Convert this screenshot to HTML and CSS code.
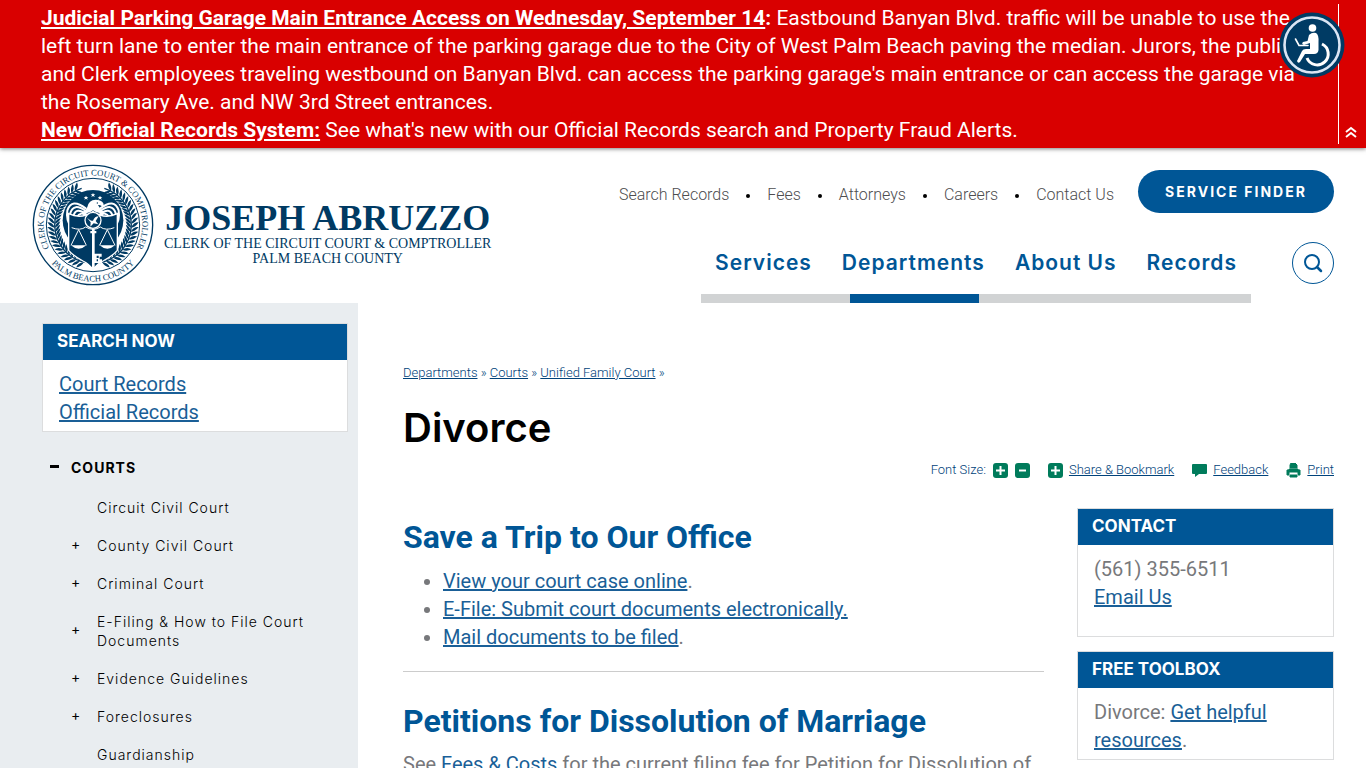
FILE: index.html
```
<!DOCTYPE html>
<html lang="en">
<head>
    <meta charset="UTF-8">
    <meta name="viewport" content="width=device-width, initial-scale=1.0">
    <title>Divorce | Clerk of the Circuit Court &amp; Comptroller, Palm Beach County</title>
    <link rel="stylesheet" href="styles.css">
</head>
<body>
    <div class="alert">
        <div class="alert-text">
            <p><a href="#">Judicial Parking Garage Main Entrance Access on Wednesday, September 14</a><b>:</b> Eastbound Banyan Blvd. traffic will be unable to use the left turn lane to enter the main entrance of the parking garage due to the City of West Palm Beach paving the median. Jurors, the public and Clerk employees traveling westbound on Banyan Blvd. can access the parking garage's main entrance or can access the garage via the Rosemary Ave. and NW 3rd Street entrances.</p>
            <p><a href="#">New Official Records System:</a> See what's new with our Official Records search and Property Fraud Alerts.</p>
        </div>
        <button class="alert-close" aria-label="Collapse alert">
            <svg width="12" height="12" viewBox="0 0 12 12"><path d="M1 6 L6 2 L11 6 M1 11 L6 7 L11 11" fill="none" stroke="#fff" stroke-width="2"/></svg>
        </button>
    </div>

    <button class="access" aria-label="Accessibility">
        <svg viewBox="0 0 66 66">
            <circle cx="33" cy="33" r="32.500" fill="#003b64"/>
            <circle cx="33" cy="33" r="27.500" fill="none" stroke="#dbe5f4" stroke-width="2.600"/>
            <circle cx="33.500" cy="16" r="3.800" fill="#fff"/>
            <path d="M30 23 Q33 20 37 21 Q40 23 39.500 30 V38 Q39 42 35 42 H26 L21 50 Q19 52 18 49 L23 39 Q24 37 27 37 H31 V31 L25 33 Q22 32 24 30 L28.500 29Z" fill="#fff"/>
            <path d="M16.500 27 L20 33.500 H29" fill="none" stroke="#fff" stroke-width="1.600" stroke-linecap="round"/>
            <path d="M43 32 A11 11 0 1 1 28 46" fill="none" stroke="#fff" stroke-width="3"/>
        </svg>
    </button>

    <header class="header">
        <a href="#" class="logo">
            <svg class="seal" viewBox="-183 -183 366 366" aria-hidden="true">
                <defs>
                    <path id="arcTop" d="M-128 74 A148 148 0 1 1 128 74"/>
                    <path id="arcBottom" d="M-131 108 A170 170 0 0 0 131 108"/>
                    <g id="leaf">
                        <path d="M-115 0 Q-127 -2 -136 -18 Q-120 -17 -115 0 Z"/>
                        <path d="M-115 0 Q-103 -3 -97 -18 Q-111 -15 -115 0 Z"/>
                    </g>
                    <g id="spray">
                        <use href="#leaf"/>
                        <use href="#leaf" transform="rotate(6)"/>
                        <use href="#leaf" transform="rotate(12)"/>
                        <use href="#leaf" transform="rotate(18)"/>
                        <use href="#leaf" transform="rotate(24)"/>
                        <use href="#leaf" transform="rotate(30)"/>
                    </g>
                    <g id="branch">
                        <use href="#spray" transform="rotate(-76)"/>
                        <use href="#spray" transform="rotate(-40)"/>
                        <use href="#spray" transform="rotate(-4)"/>
                        <use href="#spray" transform="rotate(32)"/>
                        <path d="M-20 113 A115 115 0 0 1 -34 -110" fill="none" stroke="#003a63" stroke-width="4"/>
                    </g>
                    <g id="wing" fill="none" stroke="#fff" stroke-width="6" stroke-linecap="round">
                        <path d="M-22 -50 Q-64 -82 -77 -44 Q-82 -14 -64 8"/>
                        <path d="M-22 -42 Q-58 -68 -68 -36 Q-70 -18 -56 -4"/>
                        <path d="M-22 -34 Q-50 -54 -58 -30 L-54 -16"/>
                        <path d="M-20 -28 Q-38 -42 -48 -24"/>
                    </g>
                </defs>
                <circle r="179" fill="#fff" stroke="#003a63" stroke-width="4"/>
                <g class="seal-text">
                    <text text-anchor="middle"><textPath href="#arcTop" startOffset="50%">CLERK OF THE CIRCUIT COURT &amp; COMPTROLLER</textPath></text>
                    <text text-anchor="middle"><textPath href="#arcBottom" startOffset="50%">PALM BEACH COUNTY</textPath></text>
                </g>
                <circle r="140" fill="none" stroke="#003a63" stroke-width="3"/>
                <g fill="#003a63">
                    <use href="#branch"/>
                    <use href="#branch" transform="scale(-1 1)"/>
                    <circle cy="-14" r="91"/>
                </g>
                <use href="#wing"/>
                <use href="#wing" transform="scale(-1 1)"/>
                <path d="M-21 -88 l2 4 h5 l-4 3 l2 5 l-5 -3 l-5 3 l2 -5 l-4 -3 h5z M0 -96 l2 4 h5 l-4 3 l2 5 l-5 -3 l-5 3 l2 -5 l-4 -3 h5z M21 -88 l2 4 h5 l-4 3 l2 5 l-5 -3 l-5 3 l2 -5 l-4 -3 h5z" fill="#fff"/>
                <path d="M-32 -38 Q-22 -42 -17 -54 Q-13 -75 8 -76 Q25 -76 31 -65 Q34 -60 29 -52 Q26 -61 15 -60 Q20 -47 34 -38 Q18 -30 0 -44 Q-16 -30 -32 -38Z" fill="#fff"/>
                <circle cx="13" cy="-66" r="2" fill="#003a63"/>
                <path d="M-73 -34 Q-36 -16 0 -40 Q36 -16 73 -34 L73 76 Q60 92 30 108 Q10 118 0 134 Q-10 118 -30 108 Q-60 92 -73 76Z" fill="#003a63" stroke="#fff" stroke-width="4"/>
                <circle cy="-14" r="24" fill="#003a63" stroke="#fff" stroke-width="4"/>
                <path d="M-18 -22 Q-3 -10 0 -13 Q5 -26 17 -26 L8 -12 L16 -2 L2 -5 L-8 5 L-7 -8Z" fill="#fff"/>
                <path d="M-64 8 Q-38 18 -22 6 Q0 20 22 6 Q38 18 64 8 M-43 14 L-66 61 M-43 14 L-20 61 M43 14 L20 61 M43 14 L66 61" fill="none" stroke="#fff" stroke-width="3"/>
                <path d="M-66 61 H-20 Q-43 82 -66 61 M66 61 H20 Q43 82 66 61" fill="#fff"/>
                <path d="M-3 12 H5 V128 L1 134 L-3 128Z M-8 18 H10 V25 H-8Z M5 86 H26 V95 H20 V103 H27 V114 H5Z" fill="#fff"/>
                <path d="M11 92 H17 V99 H11Z M11 103 H15 V109 H11Z" fill="#003a63"/>
            </svg>
            <span class="logo-text">
                <strong>JOSEPH ABRUZZO</strong>
                <span>CLERK OF THE CIRCUIT COURT &amp; COMPTROLLER</span>
                <span>PALM BEACH COUNTY</span>
            </span>
        </a>

        <div class="header-right">
            <div class="top-row">
                <ul class="quick-links">
                    <li><a href="#">Search Records</a></li>
                    <li><a href="#">Fees</a></li>
                    <li><a href="#">Attorneys</a></li>
                    <li><a href="#">Careers</a></li>
                    <li><a href="#">Contact Us</a></li>
                </ul>
                <button class="finder">SERVICE FINDER</button>
            </div>
            <div class="nav-row">
                <nav>
                    <ul class="nav">
                        <li><a href="#">Services</a></li>
                        <li class="active"><a href="#">Departments</a></li>
                        <li><a href="#">About Us</a></li>
                        <li><a href="#">Records</a></li>
                    </ul>
                </nav>
                <button class="search" aria-label="Search">
                    <svg width="20" height="20" viewBox="0 0 20 20"><circle cx="9" cy="9" r="7" fill="none" stroke="#005696" stroke-width="2"/><path d="M14 14 L18 18" stroke="#005696" stroke-width="2.500" stroke-linecap="round"/></svg>
                </button>
            </div>
        </div>
    </header>

    <div class="page">
        <aside class="sidebar">
            <section class="box">
                <h3>SEARCH NOW</h3>
                <div class="box-body">
                    <a href="#">Court Records</a><br>
                    <a href="#">Official Records</a>
                </div>
            </section>
            <nav class="side-nav">
                <a href="#" class="side-title">COURTS</a>
                <ul>
                    <li><a href="#">Circuit Civil Court</a></li>
                    <li class="more"><a href="#">County Civil Court</a></li>
                    <li class="more"><a href="#">Criminal Court</a></li>
                    <li class="more"><a href="#">E-Filing &amp; How to File Court Documents</a></li>
                    <li class="more"><a href="#">Evidence Guidelines</a></li>
                    <li class="more"><a href="#">Foreclosures</a></li>
                    <li><a href="#">Guardianship</a></li>
                </ul>
            </nav>
        </aside>

        <main class="content">
            <div class="breadcrumbs"><a href="#">Departments</a> » <a href="#">Courts</a> » <a href="#">Unified Family Court</a> »</div>
            <h1>Divorce</h1>

            <div class="tools">
                <div class="tool font-size">
                    <span>Font Size:</span>
                    <button aria-label="Increase font size"><svg width="15" height="15" viewBox="0 0 15 15"><rect width="15" height="15" rx="3" fill="#007b5b"/><path d="M3 7.500 H12 M7.500 3 V12" stroke="#fff" stroke-width="2"/></svg></button>
                    <button aria-label="Decrease font size"><svg width="15" height="15" viewBox="0 0 15 15"><rect width="15" height="15" rx="3" fill="#007b5b"/><path d="M4 7.500 H11" stroke="#fff" stroke-width="2"/></svg></button>
                </div>
                <div class="tool">
                    <svg width="15" height="15" viewBox="0 0 15 15"><rect width="15" height="15" rx="3" fill="#007b5b"/><path d="M3 7.500 H12 M7.500 3 V12" stroke="#fff" stroke-width="2"/></svg>
                    <a href="#">Share &amp; Bookmark</a>
                </div>
                <div class="tool">
                    <svg width="15" height="15" viewBox="0 0 15 15"><path d="M1 1 H14 Q15 1 15 2 V10 Q15 11 14 11 H7 L3 14 V11 H1 Q0 11 0 10 V2 Q0 1 1 1Z" fill="#007b5b"/></svg>
                    <a href="#">Feedback</a>
                </div>
                <div class="tool">
                    <svg width="15" height="15" viewBox="0 0 15 15"><path d="M4 5 V2 L5 0 H9 L11 2 V5Z M1 7 H3 V6 H12 V7 H14 V12 H12 V9 H3 V12 H1Z M4 12 H11 V14 H4Z" fill="#007b5b" stroke="#007b5b" stroke-width="1"/></svg>
                    <a href="#">Print</a>
                </div>
            </div>

            <div class="columns">
                <article>
                    <h2>Save a Trip to Our Office</h2>
                    <ul>
                        <li><a href="#">View your court case online</a>.</li>
                        <li><a href="#">E-File: Submit court documents electronically.</a></li>
                        <li><a href="#">Mail documents to be filed</a>.</li>
                    </ul>
                    <hr>
                    <h2>Petitions for Dissolution of Marriage</h2>
                    <p>See <a href="#">Fees &amp; Costs</a> for the current filing fee for Petition for Dissolution of</p>
                </article>
                <div class="boxes">
                    <section class="box contact">
                        <h3>CONTACT</h3>
                        <div class="box-body">(561) 355-6511<br><a href="#">Email Us</a></div>
                    </section>
                    <section class="box">
                        <h3>FREE TOOLBOX</h3>
                        <div class="box-body">Divorce: <a href="#">Get helpful resources</a>.</div>
                    </section>
                </div>
            </div>
        </main>
    </div>
</body>
</html>
```
FILE: styles.css
```
* {
    box-sizing: border-box;
}

body {
    margin: 0;
    font-family: Roboto, Arial, sans-serif;
    font-size: 20px;
    line-height: 28px;
    color: #77787b;
    background: #fff;
}

a {
    color: #1a5f97;
}

button {
    padding: 0;
    border: none;
    background: none;
    cursor: pointer;
}

svg {
    display: block;
}

ul, p, h1, h2, h3 {
    margin: 0;
    padding: 0;
}

/* Alert */
.alert {
    display: flex;
    justify-content: space-between;
    padding: 4px 0 4px 41px;
    background: #d90000;
    color: #fff;
    font-size: 21px;
    box-shadow: 0 1px 4px rgba(0, 0, 0, 0.5);
}

.alert-text {
    flex: 1;
    padding-right: 40px;
}

.alert a {
    color: #fff;
    font-weight: 700;
}

.alert-close {
    display: flex;
    align-items: flex-end;
    width: 28px;
    padding: 0 0 6px 6px;
    border-left: 1px solid #fff;
}

.access {
    position: absolute;
    top: 12px;
    right: 21px;
    width: 66px;
    height: 66px;
}

/* Header */
.header {
    display: flex;
    justify-content: space-between;
    padding: 16px 32px 0;
}

.logo {
    display: flex;
    gap: 10px;
    height: 139px;
    color: #003a63;
    text-decoration: none;
}

.seal {
    width: 122px;
    height: 122px;
}

.seal-text {
    font-family: "Liberation Serif", serif;
    font-size: 26px;
    fill: #003a63;
}

.logo-text {
    display: flex;
    flex-direction: column;
    padding-top: 36px;
    font-family: "Liberation Serif", serif;
    font-size: 14px;
    line-height: 15px;
    text-align: center;
}

.logo-text strong {
    font-size: 36px;
    line-height: 36px;
}

.header-right {
    display: flex;
    flex-direction: column;
    justify-content: space-between;
    align-items: flex-end;
    padding-top: 6px;
}

.top-row, .nav-row {
    display: flex;
}

.top-row {
    gap: 24px;
}

.quick-links {
    display: flex;
    align-items: center;
    padding-top: 6px;
    font-size: 16px;
    font-weight: 300;
    list-style: none;
}

.quick-links li + li::before {
    content: "";
    display: inline-block;
    width: 4px;
    height: 4px;
    margin: 0 17px 2px;
    border-radius: 50%;
    background: #000;
}

.quick-links a {
    color: #4d4d4f;
    text-decoration: none;
}

.finder {
    width: 196px;
    height: 43px;
    border-radius: 22px;
    background: #005696;
    color: #fff;
    font: 700 14px Inter, sans-serif;
    letter-spacing: 2px;
}

.nav-row {
    gap: 41px;
}

.nav {
    display: flex;
    gap: 30px;
    padding: 0 14px;
    border-bottom: 9px solid #d1d3d4;
    list-style: none;
    font: 600 21px/30px Inter, sans-serif;
    letter-spacing: 1px;
}

.nav li {
    position: relative;
    padding: 6px 0 16px;
}

.nav .active::after {
    content: "";
    position: absolute;
    left: 8px;
    right: 6px;
    bottom: -9px;
    height: 9px;
    background: #005696;
}

.nav a {
    color: #005696;
    text-decoration: none;
}

.search {
    display: flex;
    align-items: center;
    justify-content: center;
    width: 42px;
    height: 42px;
    border: 1px solid #005696;
    border-radius: 50%;
}

/* Page */
.page {
    display: grid;
    grid-template-columns: 358px 1fr;
}

.sidebar {
    padding: 20px 10px 10px 42px;
    background: #e9edf0;
}

.box {
    border: 1px solid #dcddde;
    background: #fff;
}

.box h3 {
    padding: 0 14px 2px;
    background: #005696;
    color: #fff;
    font: 700 17px/34px Inter, sans-serif;
}

.box-body {
    padding: 10px 16px 5px;
}

.contact .box-body {
    padding-bottom: 25px;
}

.side-nav {
    padding: 26px 24px 0 29px;
    color: #000;
    font: 300 14px/19px Inter, sans-serif;
    letter-spacing: 1px;
}

.side-nav a {
    color: #000;
    text-decoration: none;
}

.side-title {
    position: relative;
    display: block;
    margin-bottom: 11px;
    font-weight: 700;
}

.side-title::before {
    content: "";
    position: absolute;
    top: 7px;
    left: -21px;
    width: 9px;
    height: 3px;
    background: #000;
}

.side-nav ul {
    list-style: none;
}

.side-nav li {
    position: relative;
    padding: 10px 0 9px 26px;
}

.side-nav .more::before {
    content: "+";
    position: absolute;
    top: 0;
    bottom: 4px;
    left: 0;
    display: flex;
    align-items: center;
    font-weight: 400;
}

.content {
    padding: 60px 32px 0 45px;
}

.breadcrumbs, .tools {
    color: #00427a;
    font-size: 13px;
    font-weight: 300;
    line-height: 20px;
}

.breadcrumbs a, .tools a {
    color: #00427a;
}

h1 {
    margin-top: 19px;
    color: #000;
    font: 600 40px/52px Inter, sans-serif;
}

.tools {
    display: flex;
    justify-content: flex-end;
    gap: 18px;
    margin-top: 6px;
}

.tool {
    display: flex;
    align-items: center;
    gap: 6px;
}

.font-size {
    gap: 7px;
}

.columns {
    display: grid;
    grid-template-columns: 1fr 257px;
    gap: 33px;
    margin-top: 28px;
}

.columns h2 {
    margin-top: 8px;
    color: #005696;
    font-size: 32px;
    line-height: 42px;
    font-weight: 700;
}

.columns ul {
    margin-top: 9px;
    padding-left: 40px;
}

.columns hr {
    margin: 20px 0 28px;
    border: 0;
    border-top: 1px solid #ccc;
}

.columns p {
    margin-top: 8px;
}

.boxes {
    display: flex;
    flex-direction: column;
    gap: 14px;
}
```
